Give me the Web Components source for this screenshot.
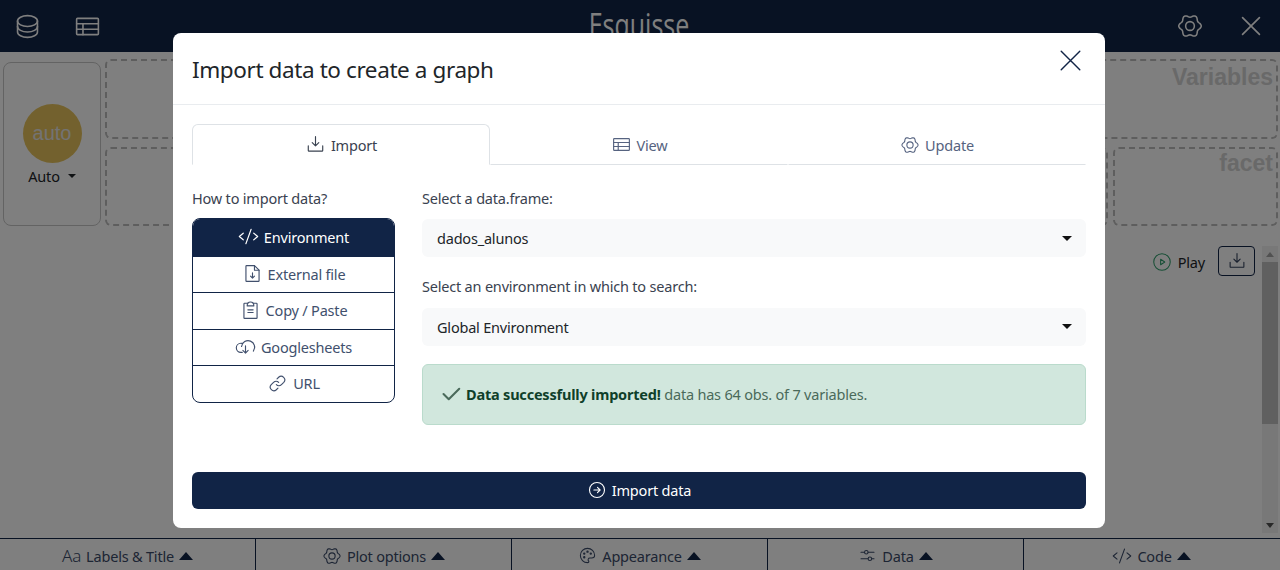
<!DOCTYPE html>
<html><head><meta charset="utf-8"><style>
html,body{margin:0;padding:0;height:100%;overflow:hidden;background:#fff}
body{font-family:"Noto Sans",Roboto,sans-serif;font-size:14.5px;letter-spacing:-.2px;color:#212529}
</style></head><body>
<x-app></x-app>
<script>
const gear=(()=>{let p=[];for(let i=0;i<72;i++){const t=i*5*Math.PI/180,r=92+11*Math.cos(6*t);p.push((i?'L':'M')+(128+r*Math.cos(t)).toFixed(1)+' '+(128+r*Math.sin(t)).toFixed(1))}return p.join('')+'Z'})();
const ICONS={
database:'<ellipse cx="128" cy="80" rx="88" ry="48"/><path d="M40 80v48c0 26.5 39.4 48 88 48s88-21.5 88-48V80"/><path d="M40 128v48c0 26.5 39.4 48 88 48s88-21.5 88-48v-48"/>',
table:'<rect x="32" y="56" width="192" height="144" rx="8"/><path d="M32 104h192M32 152h192M88 104v96"/>',
gear:'<circle cx="128" cy="128" r="40"/><path d="'+gear+'"/>',
x:'<path d="M200 56L56 200M200 200L56 56"/>',
download:'<path d="M128 144V32M216 144v56a8 8 0 0 1-8 8H48a8 8 0 0 1-8-8v-56M168 104l-40 40-40-40"/>',
code:'<path d="M64 88L16 128l48 40M192 88l48 40-48 40M160 40L96 216"/>',
file:'<path d="M200 224H56a8 8 0 0 1-8-8V40a8 8 0 0 1 8-8h96l56 56v128a8 8 0 0 1-8 8z"/><path d="M152 32v56h56M128 120v64M104 160l24 24 24-24"/>',
clip:'<path d="M96 152h64M96 120h64M160 40h40a8 8 0 0 1 8 8v168a8 8 0 0 1-8 8H56a8 8 0 0 1-8-8V48a8 8 0 0 1 8-8h40"/><path d="M88 72v-8a40 40 0 0 1 80 0v8z"/>',
cloud:'<path d="M88 200H72A56 56 0 0 1 72 88a57 57 0 0 1 14 2M80 128a80 80 0 1 1 144 56"/><path d="M128 120v88M96 176l32 32 32-32"/>',
link:'<path d="M122.3 71.4l19.8-19.8a44.1 44.1 0 0 1 62.3 62.3l-28.3 28.2a44 44 0 0 1-62.2 0"/><path d="M133.7 184.6l-19.8 19.8a44.1 44.1 0 0 1-62.3-62.3l28.3-28.2a44 44 0 0 1 62.2 0"/>',
check:'<path d="M216 72L104 184l-56-56"/>',
arrow:'<circle cx="128" cy="128" r="96"/><path d="M134 94l34 34-34 34M88 128h80"/>',
play:'<circle cx="128" cy="128" r="96"/><path d="M160 128l-48-32v64z"/>',
palette:'<path d="M128 224a96 96 0 1 1 96-96c0 26-20 34-40 34h-24a24 24 0 0 0-16 42c6 10 0 20-16 20z"/><circle cx="128" cy="76" r="9"/><circle cx="84" cy="102" r="9"/><circle cx="84" cy="152" r="9"/><circle cx="172" cy="102" r="9"/>',
sliders:'<path d="M136 172H40M216 172h-32M88 84H40M216 84h-80"/><circle cx="160" cy="172" r="24"/><circle cx="112" cy="84" r="24"/>'
};
function def(name,css,html){
  customElements.define(name,class extends HTMLElement{
    constructor(){super();const s=this.attachShadow({mode:'open'});
      s.innerHTML='<style>'+css+'</style>'+html;}
  });
}
customElements.define('x-icon',class extends HTMLElement{
  constructor(){super();this.attachShadow({mode:'open'});}
  connectedCallback(){
    const z=this.getAttribute('size')||21,w=this.getAttribute('w')||14;
    this.shadowRoot.innerHTML='<style>:host{display:inline-flex;flex:none}svg{display:block;fill:none;stroke:currentColor;stroke-linecap:round;stroke-linejoin:round}</style><svg width="'+z+'" height="'+z+'" viewBox="0 0 256 256" stroke-width="'+w+'">'+ICONS[this.getAttribute('name')]+'</svg>';
  }
});
def('x-caret',':host{display:inline-block;width:0;height:0;border-left:4px solid transparent;border-right:4px solid transparent;border-top:4px solid currentColor}','');
def('x-header',`:host{display:flex;align-items:center;height:52px;background:#112446;color:#fff;position:relative;flex:none}
.l{display:flex;gap:31px;margin-left:13px}.r{display:flex;gap:32px;margin-left:auto;margin-right:14px;align-items:center}
h1{position:absolute;left:0;right:2px;top:1px;margin:0;text-align:center;font:400 25px/36px "Open Sans",sans-serif;letter-spacing:0;transform:scaleY(1.3);transform-origin:50% 0}`,
`<div class="l"><x-icon name="database" size="29"></x-icon><x-icon name="table" size="29"></x-icon></div><h1>Esquisse</h1><div class="r"><x-icon name="gear" size="28"></x-icon><x-icon name="x" size="30"></x-icon></div>`);
def('x-geom',`:host{display:flex;flex-direction:column;align-items:center;box-sizing:border-box;width:98px;height:164px;margin-top:3px;border:1px solid #c6c6c6;border-radius:8px;padding-top:41px;flex:none}
.c{width:59px;height:59px;border-radius:50%;background:#e6c35c;color:#e6e6e6;display:flex;align-items:center;justify-content:center;font:20px "Liberation Sans",sans-serif;letter-spacing:0}
.t{margin-top:2px;line-height:22px;display:flex;align-items:center;gap:8px;color:#212529}`,
`<div class="c">auto</div><div class="t">Auto <x-caret></x-caret></div>`);
def('x-drop',`:host{display:block;box-sizing:border-box;border:2px dashed #bdbdbd;border-radius:6px;position:relative;min-width:0}
span{display:block;text-align:right;padding:0 3px 0 0;font:700 var(--s,23px)/28px "Liberation Sans",sans-serif;letter-spacing:0;color:#d2d2d2;white-space:nowrap}`,
`<span><slot></slot></span>`);
def('x-builder',`:host{display:flex;gap:4px;padding:7px 2px 0 3px;flex:none;height:174px;box-sizing:border-box}
.z{flex:1;display:flex;flex-direction:column;gap:8px;min-width:0}
.row{display:flex;gap:5px;height:79px}`,
`<x-geom></x-geom><div class="z"><x-drop style="height:80px;padding-top:2px">Variables</x-drop><div class="row"><x-drop style="flex:1"></x-drop><x-drop style="width:165px;--s:23px">facet</x-drop></div></div>`);
def('x-plot',`:host{display:flex;flex:1;min-height:0;justify-content:flex-end;padding-top:20px;box-sizing:border-box;position:relative}
.tools{display:flex;gap:13px;align-items:flex-start;margin-right:7px}
.play{display:flex;align-items:center;gap:5px;height:32px;color:#212529}.play x-icon{color:#2e9d6b;margin-left:1px}
.dl{width:37px;height:30px;box-sizing:border-box;border:1px solid #112446;border-radius:4px;display:flex;align-items:center;justify-content:center;color:#33415c}
.sb{width:16px;margin-right:2px;background:#f1f1f1;display:flex;flex-direction:column;height:287px}
.u{height:16px;display:flex;align-items:center;justify-content:center}
.up{border-left:4px solid transparent;border-right:4px solid transparent;border-bottom:5px solid #a3a3a3}
.dn{border-left:4px solid transparent;border-right:4px solid transparent;border-top:5px solid #505050}
.th{height:162px;background:#c1c1c1}.g{flex:1}`,
`<div class="tools"><div class="play"><x-icon name="play" size="22" w="12"></x-icon>Play</div><div class="dl"><x-icon name="download" size="20"></x-icon></div></div><div class="sb"><div class="u"><div class="up"></div></div><div class="th"></div><div class="g"></div><div class="u"><div class="dn"></div></div></div>`);
def('x-tabbtn',`:host{display:flex;flex:1;align-items:center;justify-content:center;gap:5px;border-left:1px solid #112446;color:#3a4a68;padding-top:2px;box-sizing:border-box}
:host(:first-child){border-left:0}
.c{display:flex;align-items:center;gap:5px}b{border-left:7px solid transparent;border-right:7px solid transparent;border-bottom:8px solid #112446}`,
`<span class="c"><slot></slot></span><b></b>`);
def('x-bottom',`:host{display:flex;height:32px;border-top:1px solid #112446;flex:none;box-sizing:border-box;padding-right:1px}`,`<slot></slot>`);
def('x-app',`:host{display:flex;flex-direction:column;height:570px;width:1280px;position:relative;overflow:hidden}`,
`<x-header></x-header><x-builder></x-builder><x-plot></x-plot>
<x-bottom>
<x-tabbtn><span style="font-size:17px;font-weight:300">Aa</span> Labels &amp; Title</x-tabbtn>
<x-tabbtn><x-icon name="gear" size="20"></x-icon> Plot options</x-tabbtn>
<x-tabbtn><x-icon name="palette" size="19"></x-icon> Appearance</x-tabbtn>
<x-tabbtn><x-icon name="sliders" size="19"></x-icon> Data</x-tabbtn>
<x-tabbtn><x-icon name="code" size="20"></x-icon> Code</x-tabbtn>
</x-bottom>
<x-modal></x-modal>`);
def('x-tab',`:host{flex:1;display:flex;align-items:center;justify-content:center;gap:5px;height:41px;box-sizing:border-box;color:#566380;margin-bottom:-1px;border:1px solid transparent;border-bottom-color:#dee2e6;border-radius:6px 6px 0 0;white-space:nowrap}
:host([active]){color:#3a4250;border-color:#dee2e6 #dee2e6 #fff #dee2e6}`,`<slot></slot>`);
def('x-item',`:host{display:flex;align-items:center;justify-content:center;gap:5px;height:36.5px;box-sizing:border-box;color:#41506d;border-top:1px solid #112446;padding-bottom:1px}
:host(:first-child){border-top:0}
:host([active]){background:#112446;color:#fff}`,`<slot></slot>`);
def('x-select',`:host{display:flex;align-items:center;justify-content:space-between;height:38px;box-sizing:border-box;background:#f8f9fa;border-radius:6px;padding:0 14px 0 15px;color:#212529}
:host(.s2){padding-bottom:1px}
x-caret{color:#111;border-left-width:5px;border-right-width:5px;border-top-width:5px}`,`<slot></slot><x-caret></x-caret>`);
def('x-alert',`:host{display:flex;align-items:center;gap:3px;height:61px;box-sizing:border-box;background:#d1e7dd;border:1px solid #badbcc;border-radius:6px;padding:0 16px 1px;color:#4a6a5a}
x-icon{color:#0f3f2a}`,`<slot></slot>`);
def('x-modal',`:host{position:absolute;inset:0;background:rgba(0,0,0,.5);display:block;padding:33px 0 0 173px}
.m{width:932px;height:495px;background:#fff;border-radius:8px;display:flex;flex-direction:column;box-sizing:border-box;position:relative}
header{height:72px;border-bottom:1px solid #e9ecef;display:flex;align-items:center;justify-content:space-between;padding:0 18px 0 19px;flex:none;box-sizing:border-box}
h2{margin:0;font-size:22.5px;font-weight:400;letter-spacing:-.4px;color:#212529;line-height:1.2;padding-top:2px}
header x-icon{color:#112446;margin-bottom:16px}
.b{padding:19px 19px 0;flex:1;display:flex;flex-direction:column}
.tabs{display:flex;height:41px;flex:none}
.c{display:flex;gap:27px;margin-top:23px}
.left{width:203px;flex:none}.right{flex:1;min-width:0}
label{display:block;line-height:21px;height:22px;color:#3a4250}
.list{border:1px solid #112446;border-radius:8px;overflow:hidden;margin-top:8px}
.right label{margin-bottom:9px}.right x-select{margin-bottom:19px}
.right label.l2{margin-bottom:10px}.right x-select.s2{margin-bottom:18px}
b{color:#0f3f2a;font-weight:700}
.go{position:absolute;left:19px;right:19px;top:439px;height:37px;box-sizing:border-box;padding-bottom:1px;background:#112446;color:#fff;border-radius:6px;display:flex;align-items:center;justify-content:center;gap:5px}`,
`<div class="m"><header><h2>Import data to create a graph</h2><x-icon name="x" size="33" w="11"></x-icon></header>
<div class="b"><div class="tabs"><x-tab active><x-icon name="download"></x-icon>Import</x-tab><x-tab><x-icon name="table"></x-icon>View</x-tab><x-tab><x-icon name="gear" size="20"></x-icon>Update</x-tab></div>
<div class="c"><div class="left"><label>How to import data?</label><div class="list">
<x-item active><x-icon name="code"></x-icon>Environment</x-item>
<x-item><x-icon name="file"></x-icon>External file</x-item>
<x-item><x-icon name="clip"></x-icon>Copy / Paste</x-item>
<x-item><x-icon name="cloud"></x-icon>Googlesheets</x-item>
<x-item><x-icon name="link"></x-icon>URL</x-item></div></div>
<div class="right"><label>Select a data.frame:</label><x-select>dados_alunos</x-select><label class="l2">Select an environment in which to search:</label><x-select class="s2">Global Environment</x-select>
<x-alert><x-icon name="check" size="24" w="22"></x-icon><span><b>Data successfully imported!</b> data has 64 obs. of 7 variables.</span></x-alert></div></div>
<div class="go"><x-icon name="arrow" size="20"></x-icon>Import data</div></div></div>`);
</script>
</body></html>
